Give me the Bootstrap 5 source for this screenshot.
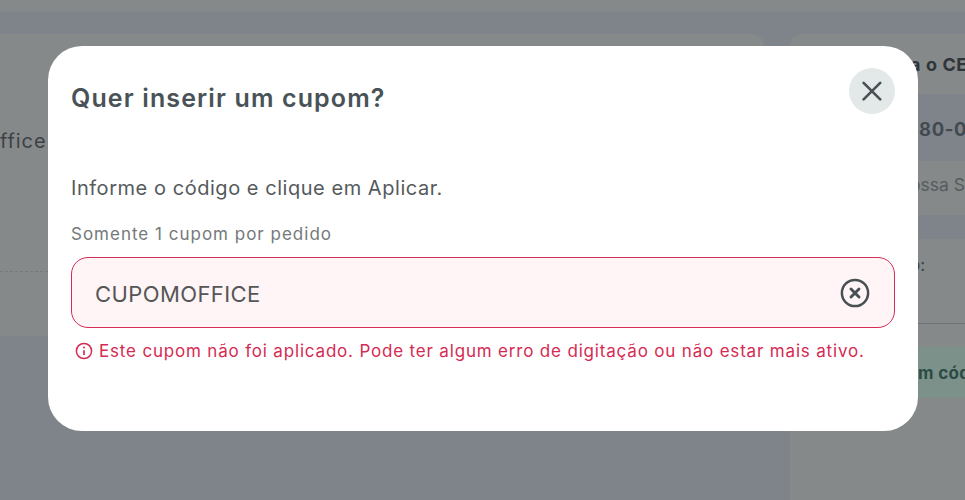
<!DOCTYPE html>
<html lang="pt-BR">
<head>
<meta charset="utf-8">
<meta name="viewport" content="width=device-width, initial-scale=1">
<title>Cupom</title>
<link href="https://cdn.jsdelivr.net/npm/bootstrap@5.3.0/dist/css/bootstrap.min.css" rel="stylesheet">
<style>
body{height:500px;background:#7f848b;font-family:Inter,"Noto Sans",sans-serif;color:#50575a}
.page-shell{height:500px;color:#3c4246}
.topbar{height:12px;background:#85898a}
.page-main{padding-top:22px}
.cart{width:764px;height:302px;background:#85898a;border-radius:0 12px 12px 0;font-size:20px;letter-spacing:.9px}
.cart-item{height:238px;border-bottom:1px dashed #747a7d;padding-top:92px}
.summary{width:175px;white-space:nowrap}
.panel{background:#85898a;padding-left:120px}
.panel-title{height:60px;border-radius:12px 0 0 0;font-size:18px;letter-spacing:.6px;color:#2f363a}
.zip{height:67px;padding:4px 0 0 129px;font-size:18.5px;letter-spacing:.6px;color:#424a4f}
.address{height:54px;padding-bottom:6px;font-size:17.5px;color:#555b5e}
.panel-total{height:85px;padding-top:14px;border-bottom:1px solid #6d7378;font-size:17px}
.panel-rest{padding-top:23px;padding-left:0}
.promo{height:51px;background:#7b918a;color:#2c4b44;padding:2px 0 0 128px;font-size:17px;letter-spacing:.3px}
.coupon{left:48px;top:46px;width:870px;height:385px;border-radius:34px;padding:22px 23px}
.coupon-title{font-size:25px;line-height:34px;letter-spacing:1.12px;color:#485257;font-weight:600;margin-top:13px}
.close-btn{width:46px;height:46px;background:#e3e9e9}
.lead-text{font-size:20px;line-height:28px;margin-top:59px;color:#555a5c;letter-spacing:.54px}
.hint{font-size:17px;line-height:24px;margin-top:20px;color:#74797b;letter-spacing:1px}
.code-field{height:71px;margin-top:11px;border:1.5px solid #d52d56;border-radius:17px;background:#fff5f6;padding:0 24px 0 23px}
.code-field input{font-size:22px;color:#555657;letter-spacing:.4px;outline:0;padding-top:3px!important}
.error-line{color:#d52b53;font-size:17px;line-height:24px;margin-top:11px;padding-left:4px;gap:6px;white-space:nowrap;letter-spacing:.82px}
</style>
<script src="https://cdn.jsdelivr.net/npm/bootstrap@5.3.0/dist/js/bootstrap.bundle.min.js"></script>
</head>
<body class="position-relative overflow-hidden">
<div class="page-shell d-flex flex-column overflow-hidden" id="page">
  <header class="topbar flex-shrink-0"></header>
  <main class="page-main d-flex justify-content-between flex-grow-1">
    <section class="cart"><div class="cart-item"><span>ffice</span></div></section>
    <aside class="summary d-flex flex-column overflow-hidden">
      <div class="panel panel-title d-flex align-items-center fw-bold flex-shrink-0"><span>a o CE</span></div>
      <div class="zip d-flex align-items-center fw-bold flex-shrink-0"><span>80-0</span></div>
      <div class="panel address d-flex align-items-center flex-shrink-0"><span>ossa S</span></div>
      <div class="panel panel-total flex-shrink-0 mt-4">o:</div>
      <div class="panel panel-rest flex-grow-1"><div class="promo d-flex align-items-center fw-bold">m cód</div></div>
    </aside>
  </main>
</div>
<div class="coupon position-absolute bg-white" role="dialog" aria-labelledby="coupon-title">
  <div class="d-flex justify-content-between align-items-start">
    <h1 class="coupon-title mb-0" id="coupon-title"><span>Quer inserir um cupom?</span></h1>
    <button class="close-btn btn rounded-circle border-0 p-0 d-flex align-items-center justify-content-center" aria-label="Fechar">
      <svg width="20" height="20" viewBox="0 0 20 20" fill="none" stroke="#485054" stroke-width="2.6" stroke-linecap="round"><path d="M1.6 1.8 18.2 18.4M18.2 1.8 1.6 18.4"/></svg>
    </button>
  </div>
  <p class="lead-text mb-0"><span>Informe o código e clique em Aplicar.</span></p>
  <label class="hint d-block" for="code"><span>Somente 1 cupom por pedido</span></label>
  <div class="code-field d-flex align-items-center">
    <input class="border-0 bg-transparent flex-grow-1 p-0" id="code" value="CUPOMOFFICE">
    <svg width="30" height="30" viewBox="0 0 30 30" fill="none" stroke="#485054" stroke-linecap="round"><circle cx="15" cy="15" r="13.1" stroke-width="2.5"/><path d="m11 11 8 8m0-8-8 8" stroke-width="2.9"/></svg>
  </div>
  <div class="error-line d-flex align-items-center">
    <svg class="flex-shrink-0" width="18" height="18" viewBox="0 0 18 18" fill="none" stroke="currentColor" stroke-width="1.5"><circle cx="9" cy="9" r="7.6"/><path d="M9 8.2v4.8" stroke-width="1.7"/><circle cx="9" cy="5.6" r="1" fill="currentColor" stroke="none"/></svg>
    <span>Este cupom não foi aplicado. Pode ter algum erro de digitação ou não estar mais ativo.</span>
  </div>
</div>
</body>
</html>
